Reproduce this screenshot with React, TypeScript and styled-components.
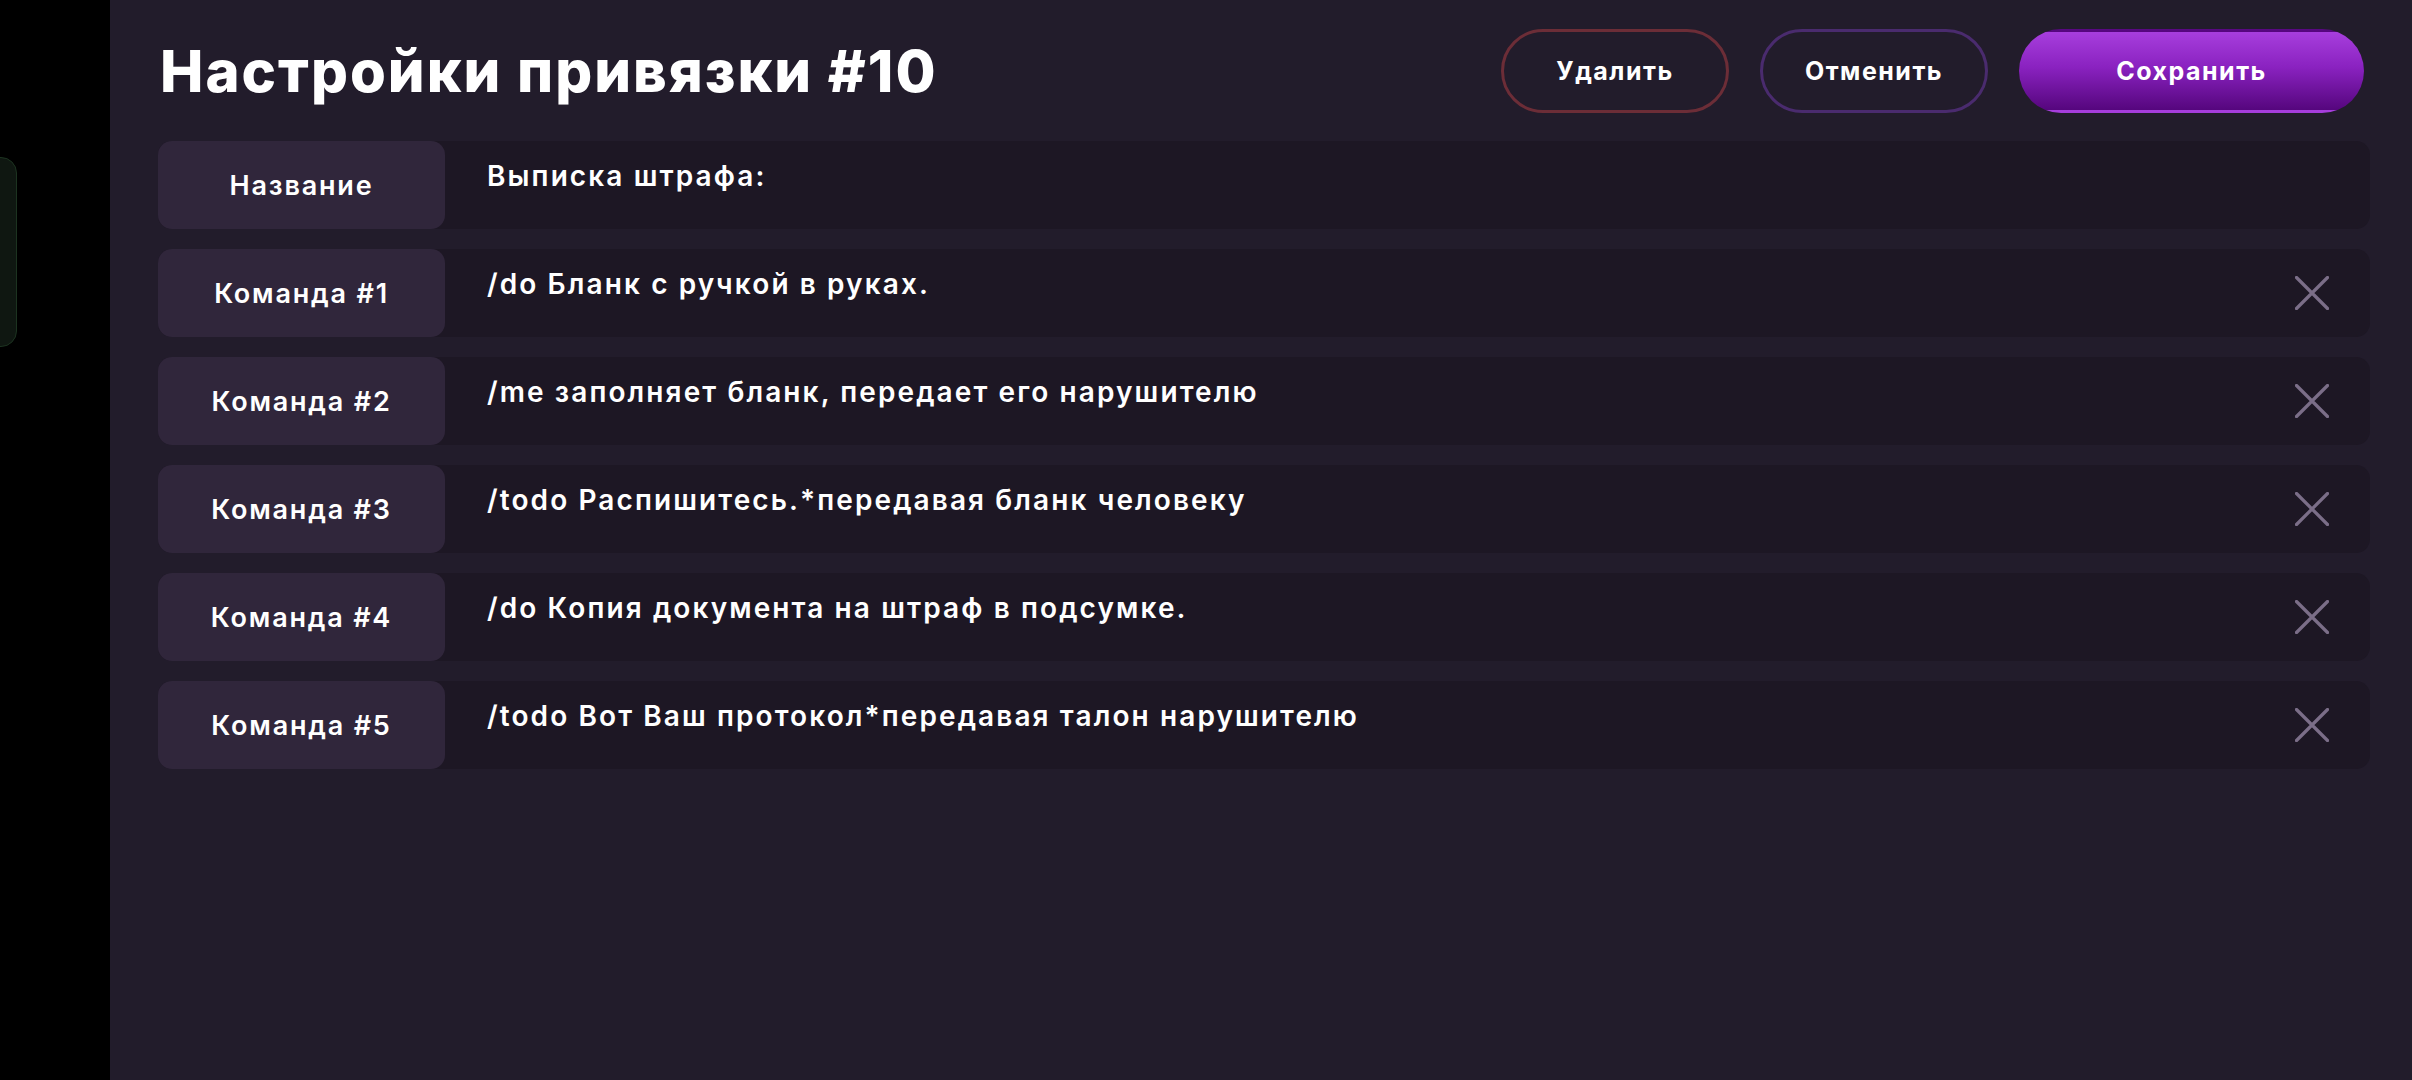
import React from "react";
import styled, { createGlobalStyle } from "styled-components";

const GlobalStyle = createGlobalStyle`
  html, body {
    margin: 0;
    padding: 0;
    background: #000;
    width: 2412px;
    height: 1080px;
    overflow: hidden;
  }
  * { box-sizing: border-box; }
`;

const FONT = `Inter, "Noto Sans", "Open Sans", sans-serif`;

const Screen = styled.div`
  display: flex;
  width: 2412px;
  height: 1080px;
  font-family: ${FONT};
  color: #fff;
`;

const Sidebar = styled.aside`
  width: 110px;
  flex: 0 0 110px;
  background: #000;
  padding-top: 157px;
  overflow: hidden;
`;

const SideCard = styled.div`
  width: 57px;
  height: 190px;
  margin-left: -40px;
  border-radius: 16px;
  background: #0f1711;
  border: 1px solid #1c3320;
`;

const Main = styled.main`
  flex: 1;
  background: #221c2b;
  padding: 29px 42px 0 48px;
  display: flex;
  flex-direction: column;
  gap: 28px;
`;

const Header = styled.header`
  display: flex;
  align-items: center;
  justify-content: space-between;
  height: 84px;
`;

const Title = styled.h1`
  margin: 0 0 0 2px;
  font-size: 58px;
  font-weight: 800;
  letter-spacing: 2px;
  color: #fff;
`;

const Actions = styled.div`
  display: flex;
  gap: 31px;
  margin-right: 6px;
`;

const Button = styled.button<{ $variant: "danger" | "ghost" | "primary" }>`
  height: 84px;
  width: ${(p) => (p.$variant === "primary" ? "345px" : "228px")};
  border-radius: 42px;
  font-family: ${FONT};
  font-size: 25px;
  font-weight: 700;
  letter-spacing: 1.5px;
  color: #fff;
  cursor: pointer;
  border: 3px solid
    ${(p) =>
      p.$variant === "danger"
        ? "#6c2d37"
        : p.$variant === "ghost"
        ? "#4a2b6e"
        : "transparent"};
  background: ${(p) =>
    p.$variant === "primary"
      ? "linear-gradient(180deg, #a73edd 0%, #8a22c0 45%, #55067d 100%)"
      : "transparent"};
`;

const List = styled.div`
  display: flex;
  flex-direction: column;
  gap: 20px;
`;

const Row = styled.div`
  display: flex;
  height: 88px;
  border-radius: 14px;
  background: #1d1724;
`;

const Label = styled.div`
  flex: 0 0 287px;
  display: flex;
  align-items: center;
  justify-content: center;
  border-radius: 14px;
  background: #30263b;
  font-size: 27px;
  font-weight: 600;
  letter-spacing: 1.8px;
  color: #fff;
`;

const Value = styled.div`
  flex: 1;
  padding: 18px 0 0 42px;
  font-size: 28px;
  line-height: 34px;
  font-weight: 600;
  color: #fff;
  letter-spacing: 2.1px;
`;

const RemoveButton = styled.button`
  flex: 0 0 auto;
  align-self: center;
  width: 34px;
  height: 34px;
  margin-right: 41px;
  padding: 0;
  border: none;
  background: transparent;
  color: #7b6e88;
  display: flex;
  cursor: pointer;
`;

const CloseIcon = () => (
  <svg width="34" height="34" viewBox="0 0 34 34" fill="none">
    <path
      d="M1.5 1.5 L32.5 32.5 M32.5 1.5 L1.5 32.5"
      stroke="currentColor"
      strokeWidth="3.2"
      strokeLinecap="round"
    />
  </svg>
);

const commands = [
  "/do Бланк с ручкой в руках.",
  "/me заполняет бланк, передает его нарушителю",
  "/todo Распишитесь.*передавая бланк человеку",
  "/do Копия документа на штраф в подсумке.",
  "/todo Вот Ваш протокол*передавая талон нарушителю",
];

export default function App() {
  return (
    <>
      <GlobalStyle />
      <Screen>
        <Sidebar>
          <SideCard />
        </Sidebar>
        <Main>
          <Header>
            <Title>Настройки привязки #10</Title>
            <Actions>
              <Button $variant="danger">Удалить</Button>
              <Button $variant="ghost">Отменить</Button>
              <Button $variant="primary">Сохранить</Button>
            </Actions>
          </Header>
          <List>
            <Row>
              <Label>Название</Label>
              <Value>Выписка штрафа:</Value>
            </Row>
            {commands.map((c, i) => (
              <Row key={i}>
                <Label>Команда #{i + 1}</Label>
                <Value>{c}</Value>
                <RemoveButton aria-label="Удалить команду">
                  <CloseIcon />
                </RemoveButton>
              </Row>
            ))}
          </List>
        </Main>
      </Screen>
    </>
  );
}
